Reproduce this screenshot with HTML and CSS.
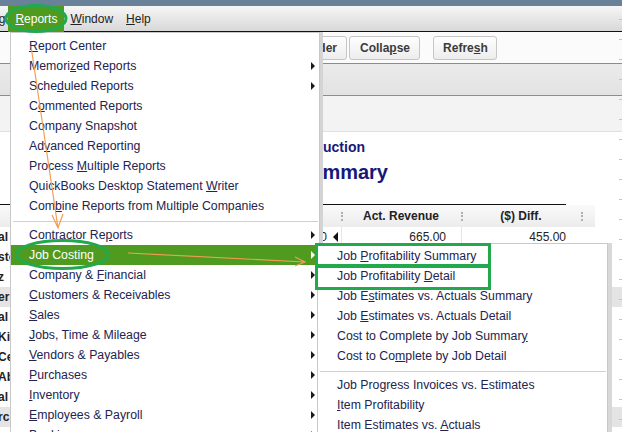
FILE: index.html
```html
<!DOCTYPE html>
<html lang="en">

<head>
  <meta charset="UTF-8">
  <meta name="viewport" content="width=device-width, initial-scale=1.0">
  <title>Reports - Job Costing</title>
  <link rel="stylesheet" href="styles.css">
</head>

<body>
  <div class="screen">
    <div class="titlebar"></div>

    <div class="menubar">
      <span class="mb-item mb-cut">Bankin<u>g</u></span>
      <span class="mb-item active"><u>R</u>eports</span>
      <span class="mb-item"><u>W</u>indow</span>
      <span class="mb-item help"><u>H</u>elp</span>
    </div>

    <div class="toolbar">
      <div class="tb-left">
        <button class="btn">Print</button>
        <button class="btn">E-mail</button>
        <button class="btn">Excel</button>
        <button class="btn">Hide He<u>a</u>der</button>
      </div>
      <button class="btn btn-collapse">Colla<u>p</u>se</button>
      <button class="btn btn-refresh">Refre<u>s</u>h</button>
    </div>

    <div class="filterbar"></div>
    <div class="datebar"></div>

    <div class="report">
      <div class="report-title">
        <div class="company">Rock Castle Construction</div>
        <div class="name">Job Profitability Summary</div>
      </div>
      <div class="rule"></div>
      <div class="col-head">
        <div class="ch"></div>
        <div class="ch"><span class="grip"></span><span class="ch-text">Act. Revenue</span></div>
        <div class="ch"><span class="grip"></span><span class="ch-text">($) Diff.</span></div>
        <div class="ch"><span class="grip"></span></div>
      </div>
      <div class="row">
        <div class="cell-name"><span>al</span><span class="num">210.00</span></div>
        <div class="cell-flag"><span class="flag"></span></div>
        <div class="cell">665.00</div>
        <div class="cell">455.00</div>
      </div>
      <div class="row"><div class="cell-name"><span>stc</span></div></div>
      <div class="row"><div class="cell-name"><span>z</span></div></div>
      <div class="row shaded"><div class="cell-name"><span>er</span></div></div>
      <div class="row"><div class="cell-name"><span>al</span></div></div>
      <div class="row"><div class="cell-name"><span>Kit</span></div></div>
      <div class="row"><div class="cell-name"><span>Ce</span></div></div>
      <div class="row"><div class="cell-name"><span>Ab</span></div></div>
      <div class="row"><div class="cell-name"><span>al</span></div></div>
      <div class="row shaded"><div class="cell-name"><span>rc</span></div></div>
    </div>

    <!-- Reports dropdown -->
    <div class="menu">
      <div class="mi"><span><u>R</u>eport Center</span></div>
      <div class="mi sub"><span>Memori<u>z</u>ed Reports</span></div>
      <div class="mi sub"><span>Sche<u>d</u>uled Reports</span></div>
      <div class="mi"><span>C<u>o</u>mmented Reports</span></div>
      <div class="mi"><span>Company Snapshot</span></div>
      <div class="mi"><span>Ad<u>v</u>anced Reporting</span></div>
      <div class="mi"><span>Process <u>M</u>ultiple Reports</span></div>
      <div class="mi"><span>QuickBooks Desktop Statement <u>W</u>riter</span></div>
      <div class="mi"><span>Com<u>b</u>ine Reports from Multiple Companies</span></div>
      <div class="sep"></div>
      <div class="mi sub"><span>Contractor Re<u>p</u>orts</span></div>
      <div class="mi sub active"><span>Job Costing</span></div>
      <div class="mi sub"><span>Company &amp; <u>F</u>inancial</span></div>
      <div class="mi sub"><span><u>C</u>ustomers &amp; Receivables</span></div>
      <div class="mi sub"><span><u>S</u>ales</span></div>
      <div class="mi sub"><span><u>J</u>obs, Time &amp; Mileage</span></div>
      <div class="mi sub"><span><u>V</u>endors &amp; Payables</span></div>
      <div class="mi sub"><span><u>P</u>urchases</span></div>
      <div class="mi sub"><span><u>I</u>nventory</span></div>
      <div class="mi sub"><span><u>E</u>mployees &amp; Payroll</span></div>
      <div class="mi sub"><span><u>B</u>anking</span></div>
    </div>

    <!-- Job Costing submenu -->
    <div class="submenu">
      <div class="mi"><span>Job <u>P</u>rofitability Summary</span></div>
      <div class="mi"><span>Job Profitability <u>D</u>etail</span></div>
      <div class="mi"><span>Job E<u>s</u>timates vs. Actuals Summary</span></div>
      <div class="mi"><span>Job <u>E</u>stimates vs. Actuals Detail</span></div>
      <div class="mi"><span>Cost to Complete by Job Summar<u>y</u></span></div>
      <div class="mi"><span>Cost to Co<u>m</u>plete by Job Detail</span></div>
      <div class="sep"></div>
      <div class="mi"><span>Job Pro<u>g</u>ress Invoices vs. Estimates</span></div>
      <div class="mi"><span><u>I</u>tem Profitability</span></div>
      <div class="mi"><span>Item Estimates vs. <u>A</u>ctuals</span></div>
    </div>

    <div class="edge"></div>

    <!-- annotation marks drawn over the screenshot -->
    <svg class="marks" width="622" height="432" viewBox="0 0 622 432">
      <g fill="none" stroke="#22a84d" stroke-width="3">
        <ellipse cx="36" cy="18.5" rx="30" ry="13"/>
        <ellipse cx="62.5" cy="254.5" rx="46" ry="14"/>
        <rect x="316.5" y="244.5" width="173" height="21"/>
        <rect x="316.5" y="266.5" width="173" height="22"/>
      </g>
      <g fill="none" stroke="#f59d55" stroke-width="1.2">
        <path d="M31 46 L58 228 M52 215 L58 228 L63 214"/>
        <path d="M128 253 L305 262 M295 257 L305 262 L295 266"/>
      </g>
    </svg>
  </div>
</body>

</html>
```

FILE: styles.css
```css
body {
  margin: 0;
  font-family: 'Liberation Sans', Arial, sans-serif;
  font-size: 12px;
  background-color: #fff;
}

.screen {
  position: relative;
  width: 622px;
  height: 432px;
  overflow: hidden;
  background-color: #fff;
}

.titlebar {
  height: 6px;
  background-color: #6a8299;
}

/* menu bar */
.menubar {
  display: flex;
  height: 25px;
  background: linear-gradient(#f6f6f6, #d8d8d8);
  border-bottom: 1px solid #111;
  color: #222;
}

.mb-item {
  display: flex;
  align-items: center;
  padding: 0 6px;
}

.mb-cut {
  margin-left: -38px;
  padding: 0 3px 0 0;
}

.mb-item.active {
  background-color: #4f9b1f;
  color: #fff;
  padding: 0 7px;
  margin-bottom: -1px;
}

.help {
  margin-left: 1px;
}

/* toolbar */
.toolbar {
  display: grid;
  grid-template-columns: 347px auto auto 1fr;
  align-items: center;
  height: 31px;
  background-color: #fbfbfb;
}

.tb-left {
  display: flex;
  justify-content: flex-end;
  gap: 3px;
  overflow: hidden;
}

.btn {
  height: 24px;
  padding: 0 9px;
  font-family: 'Liberation Sans', Arial, sans-serif;
  font-size: 12px;
  font-weight: bold;
  color: #3b3b3b;
  border: 1px solid #c6c6c6;
  border-radius: 3px;
  background: linear-gradient(#fefefe, #ededed);
  white-space: nowrap;
}

.btn-collapse {
  margin-left: 2px;
  padding: 0 9px 0 10px;
}

.btn-refresh {
  margin-left: 13px;
  padding: 0 8px 0 9px;
}

.filterbar {
  height: 31px;
  border-top: 1px solid #8c8c8c;
  border-bottom: 1px solid #8c8c8c;
  background: linear-gradient(#ebebeb, #e2e2e2);
}

.datebar {
  height: 35px;
  background-color: #f3f3f3;
  border-bottom: 1px solid #e0e0e0;
}

/* report body */
.report-title {
  width: 388px;
  padding-top: 7px;
  text-align: right;
  font-weight: bold;
  color: #17187a;
}

.company {
  padding-right: 23px;
  font-size: 14px;
  line-height: 17px;
}

.name {
  margin-top: 4px;
  font-size: 20px;
  line-height: 24px;
}

.rule {
  width: 566px;
  margin-top: 20px;
  border-top: 1px solid #111;
}

.col-head {
  display: grid;
  grid-template-columns: 341px 120px 120px 14px;
  height: 22px;
  background: linear-gradient(#fafafa, #ececec);
  width: 595px;
}

.ch {
  position: relative;
  display: flex;
  align-items: center;
  justify-content: center;
  font-weight: bold;
  color: #222;
}

.grip {
  position: absolute;
  left: 0;
  top: 7px;
  height: 9px;
  border-left: 2px dotted #b0b0b0;
}

.row {
  display: grid;
  grid-template-columns: 327px 14px 120px 120px 1fr;
  height: 20px;
  align-items: stretch;
  color: #222;
}

.row.shaded {
  background-color: #e4e4e4;
}

.cell-name {
  display: flex;
  justify-content: space-between;
  align-items: center;
  font-weight: bold;
  overflow: hidden;
}

.cell-name span:first-child {
  margin-left: -2px;
}

.num {
  font-weight: normal;
}

.cell-flag {
  display: flex;
  align-items: center;
  justify-content: flex-end;
  padding-right: 3px;
}

.flag {
  border-right: 5px solid #111;
  border-top: 5px solid transparent;
  border-bottom: 5px solid transparent;
}

.cell {
  display: flex;
  align-items: center;
  justify-content: flex-end;
  padding-right: 15px;
  border-left: 1px solid #e6e6e6;
}

/* dropdown menus */
.menu, .submenu {
  position: absolute;
  background-color: #fff;
  border: 1px solid #c9c9c9;
  color: #23244f;
  font-size: 12.3px;
  white-space: nowrap;
}

.menu {
  left: 10px;
  top: 32px;
  width: 308px;
  padding-top: 3px;
  box-shadow: 3px 0 0 #d4d4d4;
}

.submenu {
  left: 317px;
  top: 243px;
  width: 289px;
  padding-top: 2px;
  box-shadow: 4px 0 0 #d8d8d8;
}

.mi {
  display: flex;
  align-items: center;
  justify-content: space-between;
  height: 20px;
  padding: 0 4px 0 18px;
}

.submenu .mi {
  padding-left: 19px;
}

.mi.sub::after {
  content: "";
  border-left: 4px solid #1a1a1a;
  border-top: 4px solid transparent;
  border-bottom: 4px solid transparent;
}

.mi.active {
  background-color: #4f9b1f;
  color: #fff;
}

.mi.active::after {
  border-left-color: #fff;
}

.sep {
  margin: 5px 1px 3px 2px;
  border-top: 1px solid #d0d0d0;
}

.edge {
  position: absolute;
  top: 0;
  right: 0;
  width: 3px;
  height: 432px;
  background: repeating-linear-gradient(to bottom, transparent 0 19px, #c4c4c4 19px 20px);
}

.marks {
  position: absolute;
  left: 0;
  top: 0;
  pointer-events: none;
}
```
